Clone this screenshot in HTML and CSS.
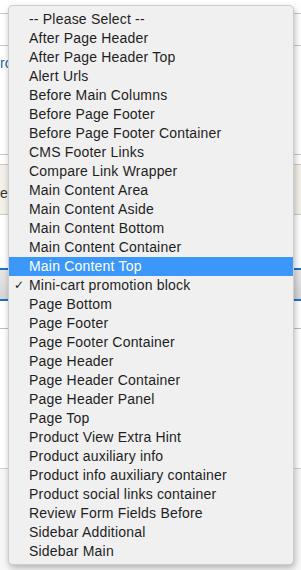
FILE: index.html
```html
<!DOCTYPE html>
<html lang="en">
  <head>
    <meta charset="UTF-8" />
    <meta name="viewport" content="width=device-width, initial-scale=1.0" />
    <title>Container select</title>
    <link rel="stylesheet" href="styles.css">
  </head>
  <body>
    <div class="page">
      <div class="strip top"></div>
      <div class="strip head"></div>
      <div class="field">
        <span class="link">ro</span>
      </div>
      <div class="note">
        <span class="note-text">ee</span>
      </div>
      <div class="spacer"></div>
      <div class="tab"></div>
      <div class="section"></div>
      <div class="section lower"></div>
      <div class="foot"></div>
    </div>

    <ul class="menu">
      <li class="item">-- Please Select --</li>
      <li class="item">After Page Header</li>
      <li class="item">After Page Header Top</li>
      <li class="item">Alert Urls</li>
      <li class="item">Before Main Columns</li>
      <li class="item">Before Page Footer</li>
      <li class="item">Before Page Footer Container</li>
      <li class="item">CMS Footer Links</li>
      <li class="item">Compare Link Wrapper</li>
      <li class="item">Main Content Area</li>
      <li class="item">Main Content Aside</li>
      <li class="item">Main Content Bottom</li>
      <li class="item">Main Content Container</li>
      <li class="item active">Main Content Top</li>
      <li class="item checked">Mini-cart promotion block</li>
      <li class="item">Page Bottom</li>
      <li class="item">Page Footer</li>
      <li class="item">Page Footer Container</li>
      <li class="item">Page Header</li>
      <li class="item">Page Header Container</li>
      <li class="item">Page Header Panel</li>
      <li class="item">Page Top</li>
      <li class="item">Product View Extra Hint</li>
      <li class="item">Product auxiliary info</li>
      <li class="item">Product info auxiliary container</li>
      <li class="item">Product social links container</li>
      <li class="item">Review Form Fields Before</li>
      <li class="item">Sidebar Additional</li>
      <li class="item">Sidebar Main</li>
    </ul>
  </body>
</html>
```

FILE: styles.css
```css
body {
  margin: 0;
  padding: 0;
  background-color: #ffffff;
  font-family: "Liberation Sans", Arial, sans-serif;
  overflow: hidden;
}
.page {
  height: 570px;
  display: flex;
  flex-direction: column;
}
.strip.top {
  height: 13px;
  border-bottom: 1px solid #c9c9c9;
}
.strip.head {
  height: 31px;
  border-bottom: 1px solid #c9c9c9;
}
.field {
  height: 109px;
  border-bottom: 1px solid #c9c9c9;
  padding-top: 8px;
  box-sizing: border-box;
}
.link {
  color: #1b5fb8;
  font-size: 14px;
}
.note {
  margin-top: 9px;
  height: 51px;
  background-color: #f3f1ea;
  border-top: 1px solid #cfcbc0;
  border-bottom: 1px solid #cfcbc0;
  box-sizing: border-box;
  padding-top: 19px;
}
.note-text {
  color: #333;
  font-size: 14px;
}
.spacer {
  height: 53px;
}
.tab {
  height: 33px;
  box-sizing: border-box;
  border-top: 2px solid #1e72c2;
  border-bottom: 2px solid #1e72c2;
  background: linear-gradient(#e6e6e6, #d6d6d6);
}
.section {
  height: 27px;
  border-bottom: 1px solid #c7bba4;
}
.section.lower {
  height: 139px;
  border-bottom: 1px solid #cfcfcf;
}
.foot {
  flex: 1;
  background-color: #f7f7f7;
}
.menu {
  position: absolute;
  top: 5px;
  left: 8px;
  width: 286px;
  margin: 0;
  padding: 4px 0 3px;
  list-style: none;
  box-sizing: border-box;
  background-color: #f0f0f0;
  border: 1px solid rgba(0, 0, 0, 0.14);
  border-radius: 5px;
  box-shadow: 1px 3px 6px rgba(0, 0, 0, 0.28);
}
.item {
  position: relative;
  height: 19px;
  line-height: 19px;
  padding-left: 20px;
  font-size: 14px;
  letter-spacing: 0.2px;
  color: #1e1e1e;
  white-space: nowrap;
}
.item.active {
  background-color: #3c97fb;
  color: #ffffff;
}
.item.checked::before {
  content: "\2713";
  position: absolute;
  left: 5px;
  top: 0;
  font-family: "DejaVu Sans", sans-serif;
  font-size: 12px;
  font-weight: bold;
}
```
